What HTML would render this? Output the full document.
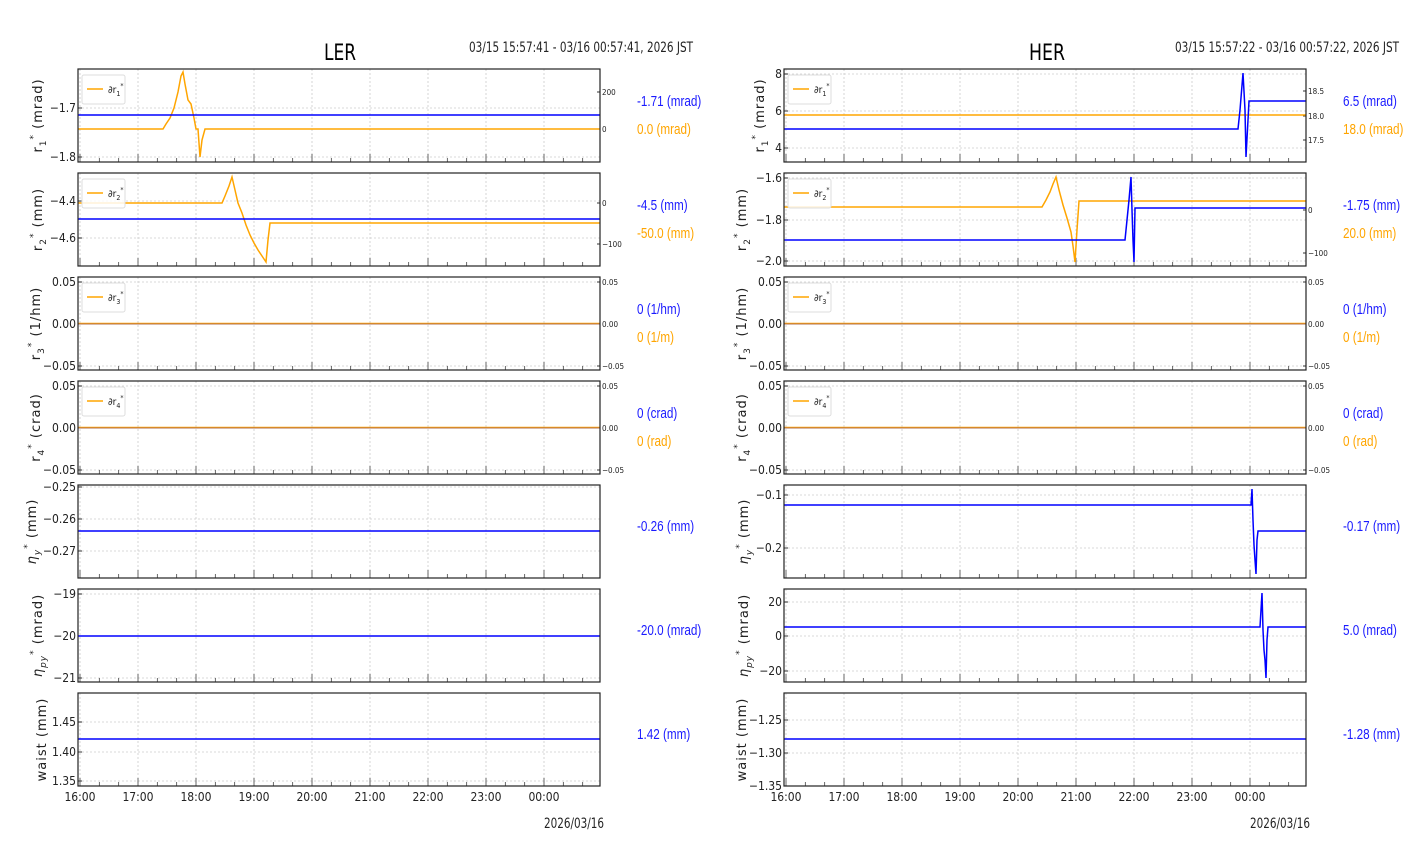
<!DOCTYPE html>
<html><head><meta charset="utf-8"><style>
html,body{margin:0;padding:0;background:#fff;width:1412px;height:864px;overflow:hidden}
svg text{font-family:"Liberation Sans Narrow","DejaVu Sans Condensed","Liberation Sans",sans-serif}
.yl{font-family:"DejaVu Sans","Liberation Sans",sans-serif !important}
.v{font-family:"Liberation Sans",sans-serif !important}
</style></head><body>
<svg id="s" width="1412" height="864" xmlns="http://www.w3.org/2000/svg">
<text x="340" y="60" font-size="22" text-anchor="middle" fill="#000" textLength="32" lengthAdjust="spacingAndGlyphs">LER</text>
<text x="693" y="52" font-size="14" text-anchor="end" fill="#222" textLength="224" lengthAdjust="spacingAndGlyphs">03/15 15:57:41 - 03/16 00:57:41, 2026 JST</text>
<text x="1047" y="60" font-size="22" text-anchor="middle" fill="#000" textLength="36" lengthAdjust="spacingAndGlyphs">HER</text>
<text x="1399" y="52" font-size="14" text-anchor="end" fill="#222" textLength="224" lengthAdjust="spacingAndGlyphs">03/15 15:57:22 - 03/16 00:57:22, 2026 JST</text>
<text x="604" y="828" font-size="14" text-anchor="end" fill="#222" textLength="60" lengthAdjust="spacingAndGlyphs">2026/03/16</text>
<text x="1310" y="828" font-size="14" text-anchor="end" fill="#222" textLength="60" lengthAdjust="spacingAndGlyphs">2026/03/16</text>
</svg>
<script>
var S=document.getElementById('s'),h='';
var H=93;
function val(x,y,c,t){return '<text class="v" transform="translate('+x+','+y+') scale(0.78,1)" font-size="15" fill="'+c+'">'+t+'</text>';}
function ax(x0,x1,top,o){
 var b=top+H;
 for(var k=0;k<9;k++){var gx=o.hx+k*58;h+='<line x1="'+gx+'" y1="'+top+'" x2="'+gx+'" y2="'+b+'" stroke="#ccc" stroke-dasharray="2,2" stroke-width="0.8"/>';}
 o.yt.forEach(function(t){h+='<line x1="'+x0+'" y1="'+t[1]+'" x2="'+x1+'" y2="'+t[1]+'" stroke="#ccc" stroke-dasharray="2,2" stroke-width="0.8"/>';
  h+='<line x1="'+x0+'" y1="'+t[1]+'" x2="'+(x0+4)+'" y2="'+t[1]+'" stroke="#333"/>';
  h+='<text x="'+(x0-2)+'" y="'+(t[1]+4)+'" font-size="12" text-anchor="end" fill="#222">'+t[0]+'</text>';});
 if(o.rt)o.rt.forEach(function(t){h+='<line x1="'+(x1-3)+'" y1="'+t[1]+'" x2="'+x1+'" y2="'+t[1]+'" stroke="#333"/>';
  h+='<text x="'+(x1+2)+'" y="'+(t[1]+3)+'" font-size="8" fill="#222">'+t[0]+'</text>';});
 for(var m=0;m<27;m++){var tx=o.hx+m*58/3;if(tx>x1)break;var L=m%3==0?8:4;h+='<line x1="'+tx+'" y1="'+b+'" x2="'+tx+'" y2="'+(b-L)+'" stroke="#444" stroke-width="0.8"/>';}
 if(o.or)h+='<polyline points="'+o.or+'" fill="none" stroke="#ffa500" stroke-width="1.5"/>';
 if(o.br)h+='<polyline points="'+o.br+'" fill="none" stroke="#b07050" stroke-width="1"/>';
 if(o.bl)h+='<polyline points="'+o.bl+'" fill="none" stroke="#0000ff" stroke-width="1.5"/>';
 h+='<rect x="'+x0+'" y="'+top+'" width="'+(x1-x0)+'" height="'+H+'" fill="none" stroke="#222" stroke-width="1.2"/>';
 if(o.leg){h+='<rect x="'+(x0+4)+'" y="'+(top+6)+'" width="43" height="29" rx="2" fill="#fff" fill-opacity="0.85" stroke="#ddd"/>';
  h+='<line x1="'+(x0+9)+'" y1="'+(top+20)+'" x2="'+(x0+25)+'" y2="'+(top+20)+'" stroke="#ffa500" stroke-width="1.5"/>';
  h+='<text x="'+(x0+30)+'" y="'+(top+24)+'" font-size="10" fill="#222">∂r<tspan font-size="7" dy="3">'+o.leg+'</tspan><tspan font-size="7" dy="-8">*</tspan></text>';}
 var cx=o.lx,cy=top+H/2;
 h+='<text class="yl" transform="translate('+cx+','+cy+') rotate(-90)" font-size="13" letter-spacing="1" text-anchor="middle" fill="#222">'+o.yl+'</text>';
 if(o.v2){h+=val(x1+37,top+37,'#1a1aff',o.v1);h+=val(x1+37,top+65,'#ffa500',o.v2);}
 else h+=val(x1+37,top+46,'#1a1aff',o.v1);
 if(o.xl){var lab=['16:00','17:00','18:00','19:00','20:00','21:00','22:00','23:00','00:00'];
  lab.forEach(function(l,k){h+='<text x="'+(o.hx+k*58)+'" y="'+(b+15)+'" font-size="12" text-anchor="middle" fill="#222">'+l+'</text>';});}
}
function r(n){return 'r<tspan font-size="9" dy="4">'+n+'</tspan><tspan font-size="9" dy="-10">*</tspan><tspan dy="6"> (';}
function eta(s){return '<tspan font-style="italic">η</tspan><tspan font-size="9" dy="4" font-style="italic">'+s+'</tspan><tspan font-size="9" dy="-10">*</tspan><tspan dy="6"> (';}
var L0=78,L1=600,R0=784,R1=1306;
ax(L0,L1,69,{hx:80,lx:42,yt:[['−1.7',108],['−1.8',157]],rt:[['200',92],['0',129]],leg:'1',yl:r(1)+'mrad)',
 bl:L0+',115 '+L1+',115',
 or:'78,129 163,129 166,124 170,118 174,108 178,92 181,76 183,72 185,84 188,100 191,104 194,118 196,129 198,129 200,157 202,140 205,129 600,129',
 v1:'-1.71 (mrad)',v2:'0.0 (mrad)'});
ax(L0,L1,173,{hx:80,lx:42,yt:[['−4.4',201],['−4.6',238]],rt:[['0',203],['−100',244]],leg:'2',yl:r(2)+'mm)',
 bl:L0+',219 '+L1+',219',
 or:'78,203 222,203 225,196 229,186 232,177 235,190 238,203 242,213 246,225 250,235 254,243 258,250 262,256 266,262 268,240 270,223 600,223',
 v1:'-4.5 (mm)',v2:'-50.0 (mm)'});
ax(L0,L1,277,{hx:80,lx:40,yt:[['0.05',282],['0.00',324],['−0.05',366]],rt:[['0.05',282],['0.00',324],['−0.05',366]],leg:'3',yl:r(3)+'1/hm)',
 br:L0+',324 '+L1+',324',or:L0+',323.5 '+L1+',323.5',v1:'0 (1/hm)',v2:'0 (1/m)'});
ax(L0,L1,381,{hx:80,lx:40,yt:[['0.05',386],['0.00',428],['−0.05',470]],rt:[['0.05',386],['0.00',428],['−0.05',470]],leg:'4',yl:r(4)+'crad)',
 br:L0+',428 '+L1+',428',or:L0+',427.5 '+L1+',427.5',v1:'0 (crad)',v2:'0 (rad)'});
ax(L0,L1,485,{hx:80,lx:36,yt:[['−0.25',487],['−0.26',519],['−0.27',551]],yl:eta('y')+'mm)',bl:L0+',531 '+L1+',531',v1:'-0.26 (mm)'});
ax(L0,L1,589,{hx:80,lx:42,yt:[['−19',594],['−20',636],['−21',678]],yl:eta('py')+'mrad)',bl:L0+',636 '+L1+',636',v1:'-20.0 (mrad)'});
ax(L0,L1,693,{hx:80,lx:46,yt:[['1.45',722],['1.40',752],['1.35',781]],yl:'waist (mm)',bl:L0+',739 '+L1+',739',v1:'1.42 (mm)',xl:1});
ax(R0,R1,69,{hx:786,lx:764,yt:[['8',74],['6',111],['4',148]],rt:[['18.5',91],['18.0',116],['17.5',140]],leg:'1',yl:r(1)+'mrad)',
 or:R0+',115 '+R1+',115',
 bl:'784,129 1238,129 1240,110 1243,73 1245,110 1246,157 1248,120 1249,101 1306,101',
 v1:'6.5 (mrad)',v2:'18.0 (mrad)'});
ax(R0,R1,173,{hx:786,lx:746,yt:[['−1.6',178],['−1.8',220],['−2.0',261]],rt:[['0',210],['−100',253]],leg:'2',yl:r(2)+'mm)',
 or:'784,207 1042,207 1046,200 1050,192 1053,184 1056,177 1059,190 1063,205 1067,218 1071,232 1073,246 1075,262 1077,230 1079,201 1306,201',
 bl:'784,240 1125,240 1127,220 1129,200 1131,177 1132,210 1133,240 1134,262 1135,208 1306,208',
 v1:'-1.75 (mm)',v2:'20.0 (mm)'});
ax(R0,R1,277,{hx:786,lx:746,yt:[['0.05',282],['0.00',324],['−0.05',366]],rt:[['0.05',282],['0.00',324],['−0.05',366]],leg:'3',yl:r(3)+'1/hm)',
 br:R0+',324 '+R1+',324',or:R0+',323.5 '+R1+',323.5',v1:'0 (1/hm)',v2:'0 (1/m)'});
ax(R0,R1,381,{hx:786,lx:746,yt:[['0.05',386],['0.00',428],['−0.05',470]],rt:[['0.05',386],['0.00',428],['−0.05',470]],leg:'4',yl:r(4)+'crad)',
 br:R0+',428 '+R1+',428',or:R0+',427.5 '+R1+',427.5',v1:'0 (crad)',v2:'0 (rad)'});
ax(R0,R1,485,{hx:786,lx:748,yt:[['−0.1',495],['−0.2',548]],yl:eta('y')+'mm)',
 bl:'784,505 1251,505 1252,489 1253,520 1254,545 1255,560 1256,574 1257,540 1258,531 1306,531',v1:'-0.17 (mm)'});
ax(R0,R1,589,{hx:786,lx:748,yt:[['20',602],['0',636],['−20',671]],yl:eta('py')+'mrad)',
 bl:'784,627 1260,627 1261,610 1262,593 1263,630 1264,650 1265,660 1266,678 1267,640 1268,627 1306,627',v1:'5.0 (mrad)'});
ax(R0,R1,693,{hx:786,lx:746,yt:[['−1.25',720],['−1.30',753],['−1.35',786]],yl:'waist (mm)',bl:R0+',739 '+R1+',739',v1:'-1.28 (mm)',xl:1});
S.insertAdjacentHTML('beforeend',h);
</script>
</body></html>
